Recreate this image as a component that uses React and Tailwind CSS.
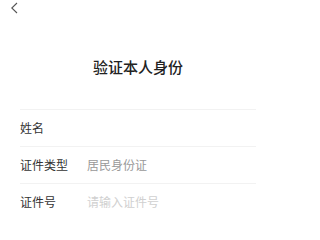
export default function App() {
  const rows = [
    { label: "姓名", value: "", placeholder: "" },
    { label: "证件类型", value: "居民身份证", placeholder: "" },
    { label: "证件号", value: "", placeholder: "请输入证件号" },
  ];

  return (
    <div
      className="w-[276px] h-[219px] bg-white overflow-hidden"
      style={{ fontFamily: '"Noto Sans CJK SC", "Noto Sans", sans-serif' }}
    >
      {/* 顶部返回 */}
      <div className="h-4 pl-[10px] pt-[2px]">
        <svg width="8" height="12" viewBox="0 0 8 12" fill="none">
          <path d="M7 1 L1.8 6 L7 11" stroke="#555" strokeWidth="1.1" />
        </svg>
      </div>

      {/* 标题 */}
      <div className="mt-[41px] h-5 leading-5 text-center text-[15px] font-medium text-[#222]">
        验证本人身份
      </div>

      {/* 表单 */}
      <div className="mt-8 px-5">
        {rows.map((row) => (
          <div
            key={row.label}
            className="h-[37px] flex items-center border-t border-[#f2f2f2] text-[12px]"
          >
            <span className="w-[67px] text-[#333]">{row.label}</span>
            {row.value && <span className="text-[#999]">{row.value}</span>}
            {row.placeholder && (
              <span className="text-[#d0d0d0]">{row.placeholder}</span>
            )}
          </div>
        ))}
      </div>
    </div>
  );
}
